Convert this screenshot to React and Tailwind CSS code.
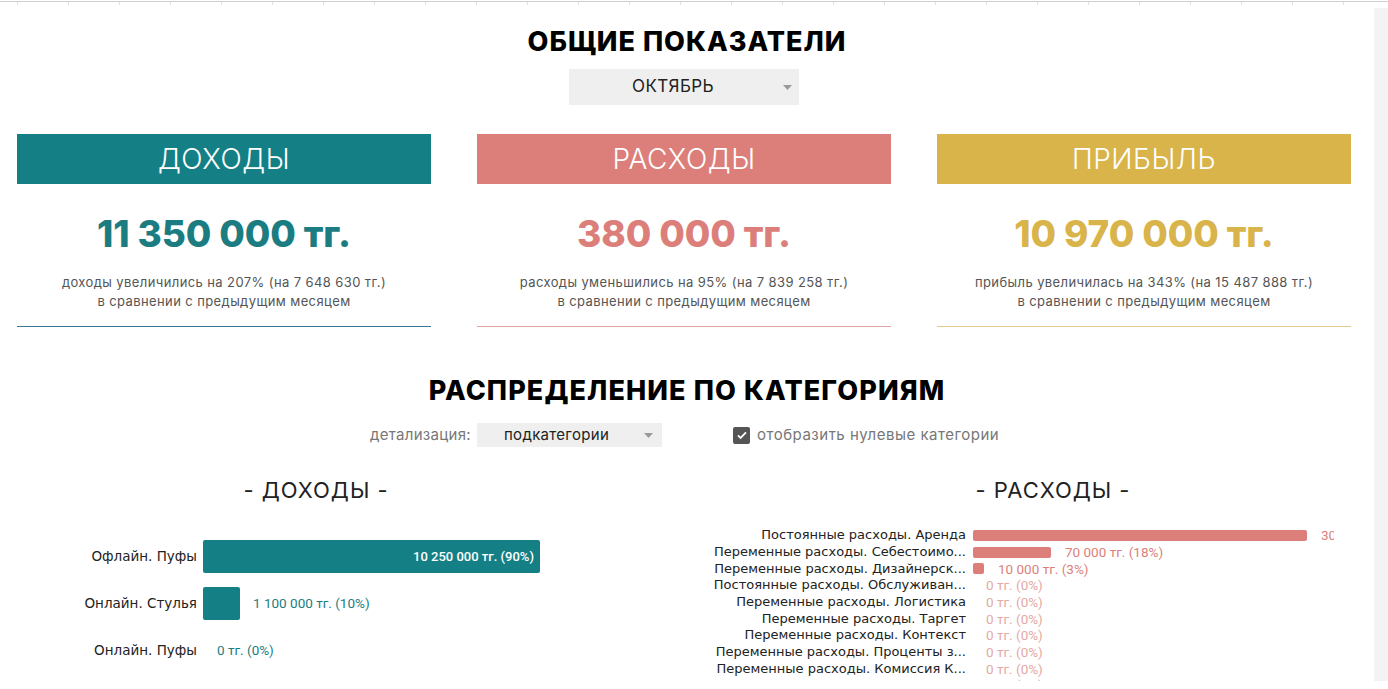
import React from "react";

const M = { fontFamily: "Inter, 'Open Sans', sans-serif" };
const T = { fontFamily: "'DejaVu Sans', Verdana, sans-serif" };
const R = { fontFamily: "Roboto, 'Noto Sans', sans-serif" };

function Caret({ className }) {
  return (
    <svg width="9" height="5" viewBox="0 0 9 5" className={className}>
      <path d="M0 0h9L4.5 5z" fill="#9a9a9a" />
    </svg>
  );
}

function Card({ title, value, l1, head, num, line }) {
  return (
    <div className={`w-[414px] flex flex-col items-center border-b ${line}`}>
      <div className={`w-full h-[50px] flex items-center justify-center ${head}`}>
        <span className="text-white text-[28px] font-light tracking-[0.5px]" style={M}>{title}</span>
      </div>
      <div className={`mt-[25px] h-[50px] leading-[50px] text-[37px] font-extrabold tracking-[-0.1px] ${num}`} style={M}>{value}</div>
      <div className="mt-[14px] mb-[15px] text-[13px] leading-[19px] text-[#555] text-center tracking-[0.4px]" style={M}>
        <div>{l1}</div>
        <div>в сравнении с предыдущим месяцем</div>
      </div>
    </div>
  );
}

const expenses = [
  ["Постоянные расходы. Аренда", 334, "300 000 тг. (79%)", false],
  ["Переменные расходы. Себестоимо...", 78, "70 000 тг. (18%)", false],
  ["Переменные расходы. Дизайнерск...", 11, "10 000 тг. (3%)", false],
  ["Постоянные расходы. Обслуживан...", 0, "0 тг. (0%)", true],
  ["Переменные расходы. Логистика", 0, "0 тг. (0%)", true],
  ["Переменные расходы. Таргет", 0, "0 тг. (0%)", true],
  ["Переменные расходы. Контекст", 0, "0 тг. (0%)", true],
  ["Переменные расходы. Проценты з...", 0, "0 тг. (0%)", true],
  ["Переменные расходы. Комиссия К...", 0, "0 тг. (0%)", true],
  ["Постоянные расходы. Коммунальн...", 0, "0 тг. (0%)", true],
];

export default function App() {
  const ticks = Array.from({ length: 27 }, (_, i) => i);
  return (
    <div className="relative w-[1388px] h-[689px] overflow-hidden bg-white">
      <div className="relative h-[3px] border-t border-[#cfcfcf] mt-[1px]">
        <div className="flex gap-[50px] pl-[17px]">
          {ticks.map((i) => (
            <span key={i} className="block w-px h-[3px] bg-[#e2e2e2]" />
          ))}
        </div>
      </div>
      <div className="flex h-[681px] overflow-hidden -mt-[4px]">
        <div className="w-[1374px] shrink-0 self-start flex flex-col items-center">
          <h1 className="mt-[24px] h-[36px] leading-[36px] text-[27px] font-extrabold text-black tracking-[1px]" style={M}>
            ОБЩИЕ ПОКАЗАТЕЛИ
          </h1>
          <div className="mt-[9px] mr-[6px] w-[230px] h-[36px] shrink-0 bg-[#efefef] relative flex items-center justify-center">
            <span className="text-[17px] text-[#222] -ml-[22px] tracking-[0.4px]" style={M}>ОКТЯБРЬ</span>
            <Caret className="absolute right-[7px] top-[16px]" />
          </div>
          <div className="mt-[29px] w-full flex pl-[17px] gap-[46px]">
            <Card title="ДОХОДЫ" value="11 350 000 тг." l1="доходы увеличились на 207% (на 7 648 630 тг.)" head="bg-[#148086]" num="text-[#1b7d81]" line="border-[#3b7895]" />
            <Card title="РАСХОДЫ" value="380 000 тг." l1="расходы уменьшились на 95% (на 7 839 258 тг.)" head="bg-[#dc7f7a]" num="text-[#dc7f7a]" line="border-[#e2a7a3]" />
            <Card title="ПРИБЫЛЬ" value="10 970 000 тг." l1="прибыль увеличилась на 343% (на 15 487 888 тг.)" head="bg-[#d9b44a]" num="text-[#d9b44a]" line="border-[#e2cb8c]" />
          </div>
          <h2 className="mt-[46px] h-[36px] leading-[36px] text-[27px] font-extrabold text-black tracking-[1.1px]" style={M}>
            РАСПРЕДЕЛЕНИЕ ПО КАТЕГОРИЯМ
          </h2>
          <div className="mt-[14px] h-[24px] w-full flex items-center">
            <span className="ml-[370px] w-[104px] text-[15px] text-[#777] tracking-[0.3px]" style={M}>детализация:</span>
            <div className="ml-[3px] w-[185px] h-[24px] bg-[#efefef] relative flex items-center">
              <span className="ml-[27px] text-[15px] text-[#222] tracking-[0.3px]" style={M}>подкатегории</span>
              <Caret className="absolute right-[9px] top-[10px]" />
            </div>
            <div className="ml-[71px] w-[17px] h-[17px] rounded-[2px] bg-[#555] flex items-center justify-center">
              <svg width="12" height="12" viewBox="0 0 12 12">
                <path d="M2 6.3l2.6 2.6L10 3.3" stroke="white" strokeWidth="1.8" fill="none" />
              </svg>
            </div>
            <span className="ml-[7px] text-[15px] text-[#777] tracking-[0.5px]" style={M}>отобразить нулевые категории</span>
          </div>
          <div className="mt-[28px] w-full flex">
            <div className="w-[632px] flex flex-col">
              <div className="h-[30px] leading-[30px] text-center text-[22px] text-[#222] tracking-[1px]" style={M}>- ДОХОДЫ -</div>
              <div className="pt-[28px] flex flex-col">
                {[
                  ["Офлайн. Пуфы", 337, "10 250 000 тг. (90%)", true],
                  ["Онлайн. Стулья", 37, "1 100 000 тг. (10%)", false],
                  ["Онлайн. Пуфы", 0, "0 тг. (0%)", false],
                ].map(([label, w, val, inside]) => (
                  <div key={label} className="h-[47px] flex items-center">
                    <div className="w-[197px] text-right text-[13.5px] text-[#222]" style={T}>{label}</div>
                    <div className="ml-[6px] flex items-center">
                      {inside ? (
                        <div className="h-[33px] rounded-[2px] bg-[#148086] flex items-center justify-end pr-[6px]" style={{ width: w }}>
                          <span className="text-white text-[13px] font-medium" style={R}>{val}</span>
                        </div>
                      ) : (
                        <>
                          {w > 0 && <div className="h-[33px] rounded-[2px] bg-[#148086]" style={{ width: w }} />}
                          <span className={`${w > 0 ? "ml-[13px]" : "ml-[14px]"} text-[13.5px] text-[#1b7d81]`} style={R}>{val}</span>
                        </>
                      )}
                    </div>
                  </div>
                ))}
              </div>
            </div>
            <div className="ml-[100px] w-[642px] flex flex-col">
              <div className="h-[30px] leading-[30px] text-center text-[22px] text-[#222] tracking-[1px]" style={M}>- РАСХОДЫ -</div>
              <div className="-ml-[42px] w-[644px] overflow-hidden pt-[22px] flex flex-col">
                {expenses.map(([label, w, val, zero]) => (
                  <div key={label} className="h-[16.7px] flex items-center whitespace-nowrap">
                    <div className="w-[276px] shrink-0 text-right text-[13px] leading-[16px] text-[#222]" style={T}>{label}</div>
                    <div className="ml-[7px] flex items-center">
                      {w > 0 && <div className="h-[11px] rounded-[2px] bg-[#dc7f7a]" style={{ width: w }} />}
                      <span className={`${w > 0 ? "ml-[14px]" : "ml-[13px]"} text-[13.5px] ${zero ? "text-[#e6a8a4]" : "text-[#dc7f7a]"}`} style={R}>{val}</span>
                    </div>
                  </div>
                ))}
              </div>
            </div>
          </div>
        </div>
        <div className="mt-[8px] w-[14px] h-[673px] bg-[#f3f3f3]" />
      </div>
    </div>
  );
}
